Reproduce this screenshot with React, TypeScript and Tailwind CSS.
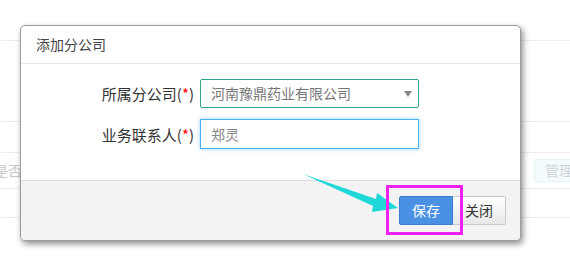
import React from 'react';

const font = { fontFamily: '"Noto Sans CJK SC", "Noto Sans", sans-serif' };

const FormRow: React.FC<{ label: string; children: React.ReactNode }> = ({ label, children }) => (
  <div className="flex items-center">
    <label className="w-[174px] shrink-0 text-right text-[15px] text-[#333] leading-none pr-[1px]">
      {label}(<span className="text-[#f00]">*</span>)
    </label>
    <div className="ml-[5px] w-[219px]">{children}</div>
  </div>
);

export default function App() {
  return (
    <div className="relative w-[570px] h-[262px] overflow-hidden bg-white" style={font}>
      {/* Page behind the dialog */}
      <div className="h-[41px] border-b border-[#ececec]" />
      <div className="h-[81px] border-b border-[#ececec]" />
      <div className="h-[31px] border-b border-[#ececec]" />
      <div className="h-[36px] border-b border-[#ececec] flex items-center justify-between">
        <span className="text-[14px] text-[#c8c8c8] -ml-[6px]">是否</span>
        <span className="mr-[-10px] h-[23px] w-[46px] flex items-center pl-[10px] text-[14px] text-[#cfd4d6] bg-[#f3fbfd] border border-[#e6f3f7] rounded-[2px]">
          管理
        </span>
      </div>
      <div className="h-[29px] border-b border-[#ececec]" />

      {/* Dialog */}
      <div className="absolute left-[20px] top-[25px] w-[501px] h-[216px] flex flex-col bg-white border border-[#9c9c9c] rounded-[5px] overflow-hidden shadow-[2px_3px_6px_rgba(0,0,0,0.45)]">
        <div className="h-[38px] shrink-0 flex items-center px-[15px] border-b border-[#e6e6e6]">
          <span className="text-[14px] text-[#444]">添加分公司</span>
        </div>
        <div className="flex-1 flex flex-col gap-[11px] pt-[15px]">
          <FormRow label="所属分公司">
            <div className="h-[29px] flex items-center justify-between pl-[10px] pr-[6px] border border-[#2fa590] rounded-[2px]">
              <span className="text-[14px] text-[#777]">河南豫鼎药业有限公司</span>
              <span className="w-0 h-0 border-l-[4px] border-r-[4px] border-t-[6px] border-l-transparent border-r-transparent border-t-[#888]" />
            </div>
          </FormRow>
          <FormRow label="业务联系人">
            <div className="h-[30px] flex items-center pl-[10px] border border-[#46b4f0] shadow-[0_0_4px_rgba(70,170,240,0.55)]">
              <span className="text-[14px] text-[#888]">郑灵</span>
            </div>
          </FormRow>
        </div>
        <div className="h-[60px] shrink-0 flex items-start justify-end pt-[15px] pr-[14px] bg-[#f3f3f3] border-t border-[#dcdcdc]">
          <button className="h-[29px] w-[54px] text-[14px] text-white bg-[#4a91e3] border border-[#3a7dd0] rounded-l-[2px]">
            保存
          </button>
          <button className="h-[29px] w-[53px] text-[14px] text-[#333] bg-gradient-to-b from-[#ffffff] to-[#e8e8e8] border border-[#c8c8c8] border-l-0 rounded-r-[2px]">
            关闭
          </button>
        </div>
      </div>

      {/* Annotation arrow */}
      <svg className="absolute left-0 top-0" width="570" height="262" viewBox="0 0 570 262">
        <polygon points="303,174 376,199 377,193 398,208 372,212 373,206" fill="#1ed8d8" />
      </svg>
      {/* Annotation box */}
      <div className="absolute left-[386px] top-[185px] w-[77px] h-[50px] border-[3px] border-[#f020f0]" />
    </div>
  );
}
